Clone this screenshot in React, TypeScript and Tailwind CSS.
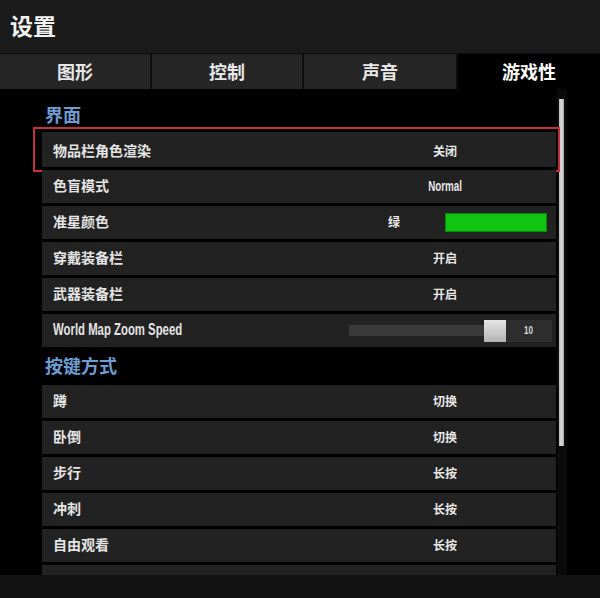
const FONT = "font-['Liberation_Sans','Noto_Sans_CJK_SC',sans-serif]";

const TABS = [
  { label: "图形", w: "w-[150px]" },
  { label: "控制", w: "w-[150px]" },
  { label: "声音", w: "w-[152px]" },
  { label: "游戏性", w: "flex-1", active: true },
];

const KEYS = [
  { label: "蹲", value: "切换" },
  { label: "卧倒", value: "切换" },
  { label: "步行", value: "长按" },
  { label: "冲刺", value: "长按" },
  { label: "自由观看", value: "长按" },
  { label: "", value: "" },
];

function Row({ children, className = "" }: { children: React.ReactNode; className?: string }) {
  return (
    <div className={`relative flex h-[33px] shrink-0 items-center bg-[#222222] ${className}`}>
      {children}
    </div>
  );
}

function Label({ text, narrow }: { text: string; narrow?: boolean }) {
  return (
    <span className="w-[307px] shrink-0 pl-[11px] text-[14px] font-bold text-[#e4e4e4]">
      {narrow ? (
        // the game font is condensed, squeeze Liberation Sans to match
        <span className="inline-block origin-left scale-x-[0.71] text-[16px] leading-[20px]">{text}</span>
      ) : (
        text
      )}
    </span>
  );
}

function Value({ text, narrow }: { text: string; narrow?: boolean }) {
  return (
    <span className="w-[192px] text-center text-[12px] font-bold text-[#e8e8e8]">
      {narrow ? (
        <span className="inline-block origin-center scale-x-[0.7] text-[14px] leading-[18px]">{text}</span>
      ) : (
        text
      )}
    </span>
  );
}

function SectionTitle({ text, className }: { text: string; className: string }) {
  return (
    <div className={`shrink-0 pl-[3px] ${className}`}>
      <span className="block text-[18px] leading-[24px] font-bold text-[#6f9bd0]">{text}</span>
    </div>
  );
}

export default function App() {
  return (
    <div className={`flex h-[598px] w-[600px] flex-col overflow-hidden bg-black ${FONT}`}>
      <div className="flex h-[54px] shrink-0 items-center border-b border-[#0c0c0c] bg-[#1b1b1b] px-[10px] pt-[2px]">
        <h1 className="text-[23px] font-bold text-[#f2f2f2]">设置</h1>
      </div>

      <div className="flex h-[35px] shrink-0 gap-[2px] bg-[#0e0e0e]">
        {TABS.map((t) => (
          <div
            key={t.label}
            className={`flex items-center justify-center pt-[3px] text-[18px] font-bold ${t.w} ${
              t.active ? "bg-black text-white" : "bg-[#262626] text-[#e6e6e6]"
            }`}
          >
            {t.label}
          </div>
        ))}
      </div>

      <div className="relative flex min-h-0 flex-1 overflow-hidden">
        <div className="flex w-[556px] flex-col gap-[3px] pl-[42px]">
          <SectionTitle text="界面" className="h-[40px] pt-[15px]" />

          <Row className="h-[35px] pt-[4px]">
            <div className="pointer-events-none absolute -top-[5px] -bottom-[5px] -left-[9px] -right-[4px] border-2 border-[#c0323c]" />
            <Label text="物品栏角色渲染" />
            <Value text="关闭" />
          </Row>
          <Row>
            <Label text="色盲模式" />
            <Value text="Normal" narrow />
          </Row>
          <Row>
            <Label text="准星颜色" />
            <span className="w-[90px] text-center text-[12px] font-bold text-[#e8e8e8]">绿</span>
            <div className="ml-[6px] h-[19px] w-[102px] border border-[#0a8a0a] bg-[#12c412]" />
          </Row>
          <Row>
            <Label text="穿戴装备栏" />
            <Value text="开启" />
          </Row>
          <Row>
            <Label text="武器装备栏" />
            <Value text="开启" />
          </Row>
          <Row>
            <Label text="World Map Zoom Speed" narrow />
            <div className="flex items-center">
              <div className="h-[11px] w-[135px] bg-[#3a3a3a]" />
              <div className="h-[22px] w-[22px] bg-gradient-to-b from-[#e6e6e6] to-[#b4b4b4]" />
              <div className="flex h-[22px] w-[46px] items-center justify-center bg-[#2e2e2e] text-[10px] font-bold text-[#d8d8d8]">
                <span className="inline-block scale-x-[0.8]">10</span>
              </div>
            </div>
          </Row>

          <SectionTitle text="按键方式" className="h-[32px] pt-[5px]" />

          {KEYS.map((k, i) => (
            <Row key={i}>
              <Label text={k.label} />
              <Value text={k.value} />
            </Row>
          ))}
        </div>

        <div className="ml-[1px] flex w-[10px] flex-col bg-[#0b0b0b] pt-[10px] pb-[4px]">
          <div className="ml-[2px] h-[347px] w-[5px] bg-gradient-to-r from-[#b8b8b8] via-[#dcdcdc] to-[#a8a8a8]" />
        </div>
      </div>

      <div className="h-[23px] shrink-0 bg-[#121212]" />
    </div>
  );
}
